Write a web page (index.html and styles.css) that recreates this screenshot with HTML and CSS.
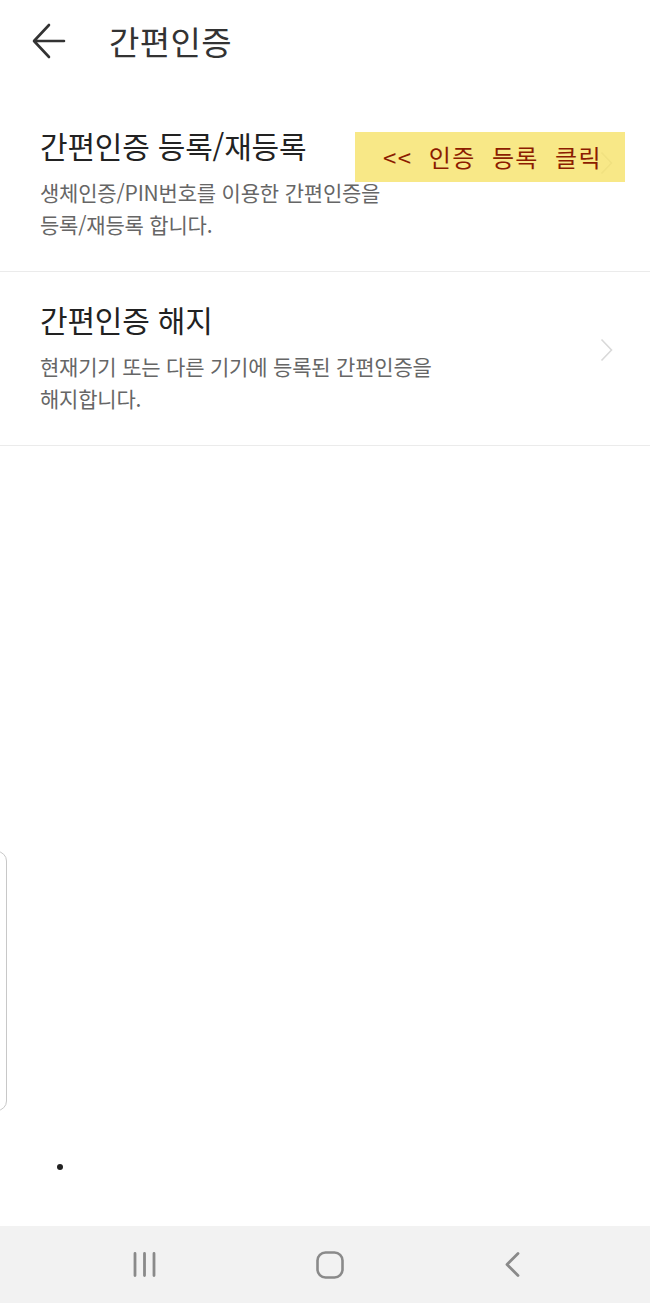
FILE: index.html
```html
<!DOCTYPE html>
<html lang="ko">
<head>
<meta charset="utf-8">
<title>간편인증</title>
<link rel="stylesheet" href="styles.css">
</head>
<body>
<div class="screen">
  <div class="header">
    <svg class="back" width="34" height="38" viewBox="0 0 34 38">
      <path d="M32 19H3M17 3L2 19l15 16" fill="none" stroke="#333" stroke-width="2.6" stroke-linecap="round" stroke-linejoin="round"/>
    </svg>
    <div class="header-title">간편인증</div>
  </div>

  <div class="list">
    <div class="item item-first">
      <div class="item-text">
        <div class="item-title">간편인증 등록/재등록</div>
        <div class="item-desc">생체인증/PIN번호를 이용한 간편인증을<br>등록/재등록 합니다.</div>
      </div>
      <svg class="chev" width="13" height="24" viewBox="0 0 13 24"><path d="M1.5 1.5l10 10.5-10 10.5" fill="none" stroke="#d9d9d9" stroke-width="1.6"/></svg>
      <div class="note">&lt;&lt;&nbsp; 인증&nbsp; 등록&nbsp; 클릭</div>
    </div>
    <div class="item item-second">
      <div class="item-text">
        <div class="item-title">간편인증 해지</div>
        <div class="item-desc">현재기기 또는 다른 기기에 등록된 간편인증을<br>해지합니다.</div>
      </div>
      <svg class="chev" width="13" height="24" viewBox="0 0 13 24"><path d="M1.5 1.5l10 10.5-10 10.5" fill="none" stroke="#d9d9d9" stroke-width="1.6"/></svg>
    </div>
  </div>

  <div class="spacer"></div>
  <div class="dot-row"><span class="dot"></span></div>

  <div class="navbar">
    <svg width="24" height="27" viewBox="0 0 24 27"><path d="M3 2.5v22M12.5 2.5v22M22 2.5v22" stroke="#8a8a8a" stroke-width="2.8" stroke-linecap="round"/></svg>
    <svg width="28" height="28" viewBox="0 0 28 28"><rect x="1.5" y="1.5" width="25" height="25" rx="8" fill="none" stroke="#8a8a8a" stroke-width="2.6"/></svg>
    <svg width="16" height="27" viewBox="0 0 16 27"><path d="M14 2.5L3 13.5l11 11" fill="none" stroke="#8a8a8a" stroke-width="2.8" stroke-linecap="round" stroke-linejoin="round"/></svg>
  </div>

  <div class="edge-panel"></div>
</div>
</body>
</html>
```

FILE: styles.css
```css
body{
	margin:0;
	font-family:"Noto Sans CJK KR","Noto Sans",sans-serif;
	color:#222;
	background:#fff;
}
.screen{
	position:relative;
	width:650px;
	height:1303px;
	display:flex;
	flex-direction:column;
	overflow:hidden;
}
.header{
	height:82px;
	display:flex;
	align-items:center;
	padding-left:32px;
}
.back{
	display:block;
}
.header-title{
	margin-left:43px;
	font-size:33px;
	color:#333;
	letter-spacing:0.4px;
}
.list{
	margin-top:16px;
}
.item{
	position:relative;
	display:flex;
	align-items:center;
	padding:27px 37px 31px 40px;
	border-bottom:1.5px solid #ebebeb;
}
.item-text{
	flex:1;
}
.item-title{
	font-size:30px;
	line-height:40px;
	letter-spacing:-0.2px;
	color:#222;
}
.item-desc{
	margin-top:11px;
	font-size:21px;
	line-height:32px;
	letter-spacing:-0.2px;
	color:#666;
}
.chev{
	display:block;
	position:relative;
	z-index:0;
}
.item-first .chev{
	margin-top:-40px;
}
.item-second .chev{
	margin-top:-14px;
}
.note{
	position:absolute;
	z-index:1;
	top:34px;
	right:25px;
	width:270px;
	height:50px;
	box-sizing:border-box;
	padding:7px 0 0 28px;
	background:rgba(246,226,105,0.8);
	color:#8c1c00;
	font-size:24px;
	letter-spacing:1.4px;
	white-space:nowrap;
}
.spacer{
	flex:1;
}
.dot-row{
	height:62px;
	padding-left:57px;
}
.dot{
	display:block;
	width:6px;
	height:6px;
	border-radius:50%;
	background:#222;
}
.navbar{
	height:77px;
	background:#f2f2f2;
	display:flex;
	align-items:center;
	justify-content:space-between;
	padding:0 130px 0 132px;
}
.navbar svg{
	display:block;
}
.edge-panel{
	position:absolute;
	left:-20px;
	top:851px;
	width:25px;
	height:258px;
	border:1.5px solid #c8c8c8;
	border-radius:10px;
}
```
